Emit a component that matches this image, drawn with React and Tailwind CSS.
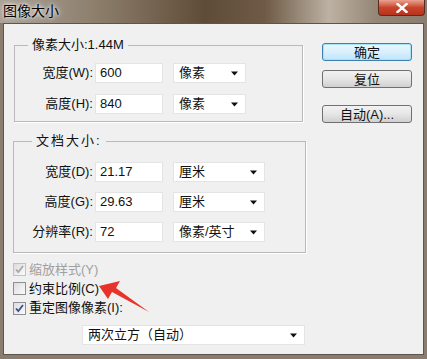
import React from 'react';

const font = 'font-["Liberation_Sans","Noto_Sans_CJK_SC",sans-serif]';

const Arrow = () => (
  <svg width="8" height="5" viewBox="0 0 8 5" className="shrink-0">
    <path d="M0 0.5h7L3.5 4.5z" fill="#111" />
  </svg>
);

const Field = ({ value }) => (
  <div className="h-[20px] w-[68px] bg-white border border-[#e4e4e4] flex items-center pl-[4px] text-[13px] text-[#111]">
    {value}
  </div>
);

const Select = ({ value, width }) => (
  <div
    className={`h-[20px] bg-white border border-[#e4e4e4] flex items-center justify-between pl-[5px] pr-[6px] text-[13px] text-[#111] ${width}`}
  >
    <span>{value}</span>
    <Arrow />
  </div>
);

const Row = ({ label, value, unit, labelW, selW }) => (
  <div className="flex items-center h-[20px]">
    <div className={`text-right text-[13px] text-[#111] ${labelW}`}>{label}</div>
    <div className="ml-[2px]">
      <Field value={value} />
    </div>
    <div className="ml-[10px]">
      <Select value={unit} width={selW} />
    </div>
  </div>
);

const Check = ({ checked, disabled }) => (
  <div
    className={`w-[13px] h-[13px] border flex items-center justify-center bg-gradient-to-br from-[#dcdcdc] to-[#fbfbfb] ${
      disabled ? 'border-[#c2c2c2]' : 'border-[#8e8f8f]'
    }`}
  >
    {checked && (
      <svg width="9" height="9" viewBox="0 0 9 9">
        <path
          d="M1 4.5l2.3 2.6L8 1"
          fill="none"
          stroke={disabled ? '#a8a8a8' : '#3b4f91'}
          strokeWidth="1.8"
        />
      </svg>
    )}
  </div>
);

const Button = ({ children, primary }) => (
  <div
    className={`w-[90px] h-[18px] rounded-[3px] border flex items-center justify-center text-[13px] leading-none text-[#111] ${
      primary
        ? 'border-[#3c7fb1] bg-gradient-to-b from-[#eaf6fd] via-[#d9f0fc] to-[#bce5fc] shadow-[inset_0_0_0_1px_#a8e3f8]'
        : 'border-[#707070] bg-gradient-to-b from-[#f2f2f2] via-[#e6e6e6] to-[#d0d0d0]'
    }`}
  >
    {children}
  </div>
);

const App = () => {
  return (
    <div className={`relative w-[427px] h-[359px] overflow-hidden bg-[#8a7c6e] ${font}`}>
      {/* title bar */}
      <div className="h-[23px] flex items-start justify-between bg-[linear-gradient(to_right,#aaa297_0%,#8e7f6d_22%,#5f4c38_48%,#6e5a46_62%,#bcb1a3_77%,#958776_88%,#8b7e70_100%)]">
        <div className="pl-[3px] pt-[2px] text-[14px] leading-[18px] text-black [text-shadow:0_0_6px_#fff,0_0_3px_#fff]">
          图像大小
        </div>
        <div className="mr-[2px] w-[47px] h-[16px] rounded-b-[4px] border border-t-0 border-[#5a2a20] bg-gradient-to-b from-[#e9a18f] via-[#c7452c] to-[#b8321e] flex items-center justify-center">
          <svg width="12" height="10" viewBox="0 0 12 10">
            <path d="M1.5 1l9 8M10.5 1l-9 8" stroke="#fff" strokeWidth="2.4" strokeLinecap="square" />
          </svg>
        </div>
      </div>

      {/* client area */}
      <div className="mx-[3px] h-[332px] border border-[#5d544b] bg-[#f0f0f0] flex items-start">
        <div className="w-[302px] flex flex-col">
          {/* pixel size */}
          <fieldset className="mt-[13px] ml-[10px] w-[289px] border border-[#b9b9b9] pb-[7px] shadow-[1px_1px_0_#fff]">
            <legend className="ml-[13px] px-[4px] text-[13px] leading-[16px] text-[#111]">像素大小:1.44M</legend>
            <div className="pt-[10px] flex flex-col gap-[11px]">
              <Row label="宽度(W):" value="600" unit="像素" labelW="w-[78px]" selW="w-[73px]" />
              <Row label="高度(H):" value="840" unit="像素" labelW="w-[78px]" selW="w-[73px]" />
            </div>
          </fieldset>

          {/* document size */}
          <fieldset className="mt-[11px] ml-[9px] w-[293px] border border-[#b9b9b9] pb-[10px] shadow-[1px_1px_0_#fff]">
            <legend className="ml-[18px] px-[4px] text-[13px] leading-[16px] tracking-[2px] text-[#111]">文档大小:</legend>
            <div className="pt-[13px] flex flex-col gap-[10px]">
              <Row label="宽度(D):" value="21.17" unit="厘米" labelW="w-[79px]" selW="w-[92px]" />
              <Row label="高度(G):" value="29.63" unit="厘米" labelW="w-[79px]" selW="w-[92px]" />
              <Row label="分辨率(R):" value="72" unit="像素/英寸" labelW="w-[79px]" selW="w-[92px]" />
            </div>
          </fieldset>

          {/* options */}
          <div className="mt-[7px] ml-[9px] flex flex-col text-[13px]">
            <div className="h-[19px] flex items-center gap-[3px] text-[#a0a0a0]">
              <Check checked disabled />
              <span>缩放样式(Y)</span>
            </div>
            <div className="h-[19px] flex items-center gap-[3px] text-[#111]">
              <Check />
              <span>约束比例(C)</span>
            </div>
            <div className="h-[20px] flex items-center gap-[3px] text-[#111]">
              <Check checked />
              <span>重定图像像素(I):</span>
            </div>
          </div>
          <div className="mt-[7px] ml-[78px]">
            <Select value="两次立方（自动）" width="w-[223px]" />
          </div>
        </div>

        {/* buttons */}
        <div className="ml-[16px] pt-[19px] flex flex-col">
          <Button primary>确定</Button>
          <div className="mt-[9px]">
            <Button>复位</Button>
          </div>
          <div className="mt-[17px]">
            <Button>自动(A)...</Button>
          </div>
        </div>
      </div>

      {/* red annotation arrow */}
      <svg className="absolute inset-0 pointer-events-none" width="427" height="359" viewBox="0 0 427 359">
        <polygon points="99,286 120,281 116,288 149,312 112,292 108,299" fill="#e8332a" />
      </svg>
    </div>
  );
};

export default App;
